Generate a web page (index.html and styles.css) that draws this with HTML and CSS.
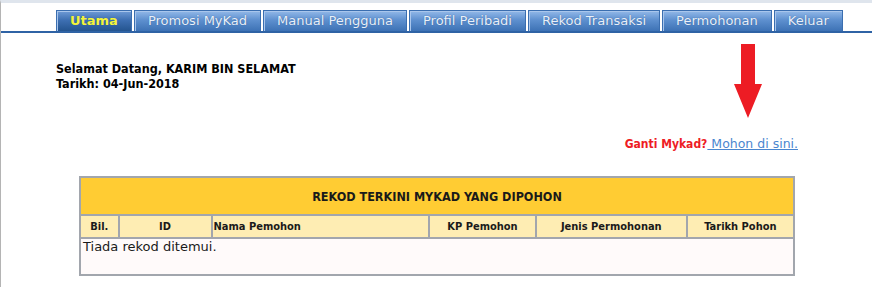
FILE: index.html
```html
<!DOCTYPE html>
<html>
  <head>
    <title>MyKad - Utama</title>
    <link rel="stylesheet" href="styles.css">
  </head>
  <body>
    <div class="frame">
      <ul class="tabs">
        <li class="active"><a href="#">Utama</a></li>
        <li><a href="#">Promosi MyKad</a></li>
        <li><a href="#">Manual Pengguna</a></li>
        <li><a href="#">Profil Peribadi</a></li>
        <li><a href="#">Rekod Transaksi</a></li>
        <li><a href="#">Permohonan</a></li>
        <li><a href="#">Keluar</a></li>
      </ul>
      <div class="content">
        <div class="welcome">
          Selamat Datang, KARIM BIN SELAMAT<br>
          Tarikh: 04-Jun-2018
        </div>
        <div class="notice">
          <svg class="arrow" width="30" height="74" viewBox="0 0 30 74">
            <polygon points="8,0 22,0 22,40 29,40 15,74 1,40 8,40" fill="#ed1c24" />
          </svg>
          <p><span class="ask">Ganti Mykad?</span><a href="#"> Mohon di sini.</a></p>
        </div>
        <table class="rekod">
          <tr>
            <th class="title" colspan="6">REKOD TERKINI MYKAD YANG DIPOHON</th>
          </tr>
          <tr class="cols">
            <th class="bil">Bil.</th>
            <th class="id">ID</th>
            <th class="nama">Nama Pemohon</th>
            <th class="kp">KP Pemohon</th>
            <th class="jenis">Jenis Permohonan</th>
            <th class="tarikh">Tarikh Pohon</th>
          </tr>
          <tr class="empty">
            <td colspan="6">Tiada rekod ditemui.</td>
          </tr>
        </table>
      </div>
    </div>
  </body>
</html>
```

FILE: styles.css
```css
body {
  margin: 0;
  background: #ffffff;
  font-family: "DejaVu Sans Condensed", "DejaVu Sans", sans-serif;
  font-size: 12px;
  color: #000000;
}
.frame {
  min-height: 284px;
  border-top: 3px solid #dfe5ed;
  border-left: 1px solid #b4b4b4;
}
.tabs {
  display: flex;
  gap: 2px;
  margin: 0;
  padding: 7px 0 0 55px;
  list-style: none;
  border-bottom: 2px solid #2f63a5;
}
.tabs li a {
  display: block;
  height: 20px;
  line-height: 20px;
  padding: 0 13px;
  border: 1px solid #3a6eb0;
  border-bottom: none;
  background: linear-gradient(#92b8e8, #5e90cf 45%, #3d72b5);
  box-shadow: inset 1px 1px 0 #a9c6ec;
  color: #e9f0fa;
  font-family: "DejaVu Sans", sans-serif;
  font-size: 13px;
  text-decoration: none;
  text-shadow: 0 0 1px #2d5a94;
}
.tabs li.active a {
  background: linear-gradient(#6f9bd6, #3e70b3 45%, #24548f);
  color: #f4f43a;
  font-weight: bold;
}
.content {
  padding: 28px 74px 0 55px;
}
.welcome {
  font-size: 12.5px;
  font-weight: bold;
  line-height: 15px;
}
.notice {
  display: flex;
  flex-direction: column;
  align-items: flex-end;
  margin-top: -47px;
}
.arrow {
  display: block;
  margin-right: 35px;
}
.notice p {
  margin: 18px 0 0;
  line-height: 15px;
}
.ask {
  color: #ee1c25;
  font-weight: bold;
}
.notice a {
  color: #4a86cf;
  font-family: "DejaVu Sans", sans-serif;
  font-size: 12.5px;
  text-decoration: underline;
}
.rekod {
  width: 716px;
  margin: 24px 0 0 23px;
  border-collapse: collapse;
  border: 2px solid #a2a6ad;
}
.rekod th,
.rekod td {
  border: 2px solid #a2a6ad;
  padding: 0 2px;
}
.rekod th.title {
  height: 36px;
  background: #ffcc33;
  font-size: 12.5px;
  color: #1a1a1a;
}
.rekod .cols th {
  height: 21px;
  background: #feedb3;
  font-size: 11px;
  color: #1a1a1a;
}
.rekod .cols th.nama {
  padding-left: 1px;
  text-align: left;
}
.bil { width: 33px; }
.id { width: 89px; }
.nama { width: 217px; }
.kp { width: 102px; }
.jenis { width: 147px; }
.tarikh { width: 103px; }
.rekod .empty td {
  height: 35px;
  vertical-align: top;
  background: #fffafa;
  font-family: "DejaVu Sans", sans-serif;
  font-size: 13px;
  color: #1a1a1a;
}
```
